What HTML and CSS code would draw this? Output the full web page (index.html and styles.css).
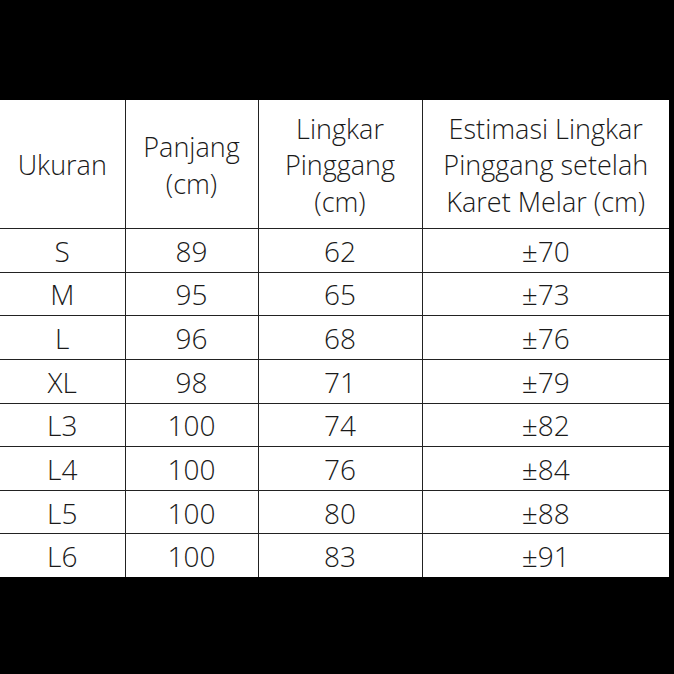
FILE: index.html
```html
<!DOCTYPE html>
<html>
<head>
<meta charset="utf-8">
<link rel="stylesheet" href="styles.css">
</head>
<body>
<div class="frame">
<table class="size">
<colgroup><col class="c1"><col class="c2"><col class="c3"><col class="c4"></colgroup>
<thead>
<tr><th>Ukuran</th><th>Panjang<br>(cm)</th><th>Lingkar<br>Pinggang<br>(cm)</th><th>Estimasi Lingkar<br>Pinggang setelah<br>Karet Melar (cm)</th></tr>
</thead>
<tbody>
<tr><td>S</td><td>89</td><td>62</td><td>±70</td></tr>
<tr><td>M</td><td>95</td><td>65</td><td>±73</td></tr>
<tr><td>L</td><td>96</td><td>68</td><td>±76</td></tr>
<tr><td>XL</td><td>98</td><td>71</td><td>±79</td></tr>
<tr><td>L3</td><td>100</td><td>74</td><td>±82</td></tr>
<tr><td>L4</td><td>100</td><td>76</td><td>±84</td></tr>
<tr><td>L5</td><td>100</td><td>80</td><td>±88</td></tr>
<tr><td>L6</td><td>100</td><td>83</td><td>±91</td></tr>
</tbody>
</table>
</div>
</body>
</html>
```
FILE: styles.css
```css
html, body { margin: 0; padding: 0; background: #000; }
body { width: 674px; height: 674px; overflow: hidden; }
.frame { padding-top: 100px; }
.size {
  border-collapse: collapse;
  table-layout: fixed;
  width: 669px;
  background: #fff;
  font-family: "Open Sans", sans-serif;
  font-weight: 300;
  color: #1a1a1a;
  font-size: 28px;
}
.c1 { width: 125px; }
.c2 { width: 133px; }
.c3 { width: 164px; }
.c4 { width: 247px; }
.size th, .size td {
  border: 1.5px solid #222;
  text-align: center;
  padding: 0;
  font-weight: 300;
}
.size tr:first-child th { border-top: none; }
.size tr th:first-child, .size tr td:first-child { border-left: none; }
.size tr th:last-child, .size tr td:last-child { border-right: none; }
.size tbody tr:last-child td { border-bottom: none; }
.size th { height: 125px; padding-top: 3px; line-height: 36.5px; font-size: 27px; }
.size td { height: 41.65px; line-height: 40px; padding-top: 1px; }
```
